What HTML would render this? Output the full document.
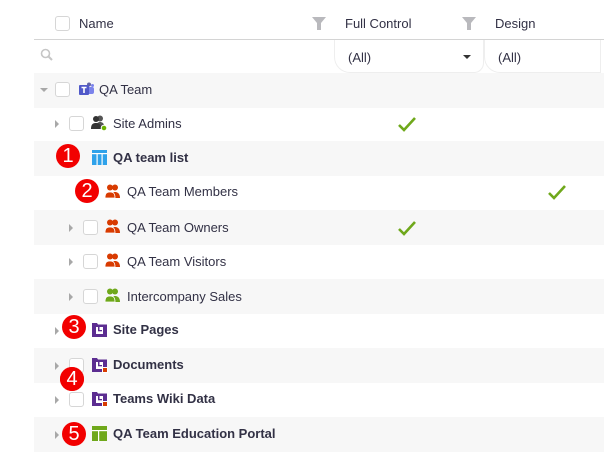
<!DOCTYPE html>
<html><head><meta charset="utf-8"><style>
*{margin:0;padding:0;box-sizing:border-box}
body{width:604px;height:455px;background:#fff;font-family:"Liberation Sans",sans-serif;font-size:13px;color:#323145;position:relative;overflow:hidden}
.a{position:absolute}
.row{position:absolute;left:34px;width:570px;height:35px}
.g{background:#f7f7f7}
.cb{position:absolute;width:15px;height:15px;border:1px solid #d6d6d6;border-radius:3px;background:#fff}
.car{position:absolute;width:0;height:0;border-top:4px solid transparent;border-bottom:4px solid transparent;border-left:4px solid #a8a8a8}
.t{position:absolute;line-height:16px;white-space:nowrap}
.b{position:absolute;width:24px;height:24px;border-radius:12px;background:#f20000;color:#fff;font-size:20px;line-height:24px;text-align:center}
.chk{position:absolute}
</style></head><body>
<!-- header -->
<div class="cb" style="left:55px;top:16px"></div>
<div class="t" style="left:79px;top:16px">Name</div>
<svg class="a" style="left:311px;top:16px" width="16" height="15"><path d="M1 1H15L10 7V14H6V7Z" fill="#b9b9bd"/></svg>
<div class="t" style="left:345px;top:16px">Full Control</div>
<svg class="a" style="left:461px;top:16px" width="16" height="15"><path d="M1 1H15L10 7V14H6V7Z" fill="#b9b9bd"/></svg>
<div class="t" style="left:495px;top:16px">Design</div>
<div class="a" style="left:34px;top:39px;width:570px;height:1px;background:#d4d4d4"></div>
<!-- filter row -->
<svg class="a" style="left:40px;top:48px" width="14" height="14"><circle cx="5.5" cy="5.5" r="4" fill="none" stroke="#c6c6c6" stroke-width="1.6"/><path d="M8.5 8.5L12 12" stroke="#c6c6c6" stroke-width="2"/></svg>
<div class="a" style="left:334px;top:40px;width:150px;height:33px;border:1px solid #eee;border-top:none;border-radius:0 0 10px 16px"></div>
<div class="t" style="left:348px;top:50px">(All)</div>
<div class="a" style="left:463px;top:55px;border-left:4px solid transparent;border-right:4px solid transparent;border-top:4px solid #333"></div>
<div class="a" style="left:484px;top:40px;width:117px;height:33px;border:1px solid #eee;border-top:none;border-radius:0 0 0 16px"></div>
<div class="t" style="left:498px;top:50px">(All)</div>
<!-- rows -->
<div class="row g" style="top:73px"></div>
<div class="row" style="top:107px"></div>
<div class="row g" style="top:141px"></div>
<div class="row" style="top:176px"></div>
<div class="row g" style="top:210px"></div>
<div class="row" style="top:245px"></div>
<div class="row g" style="top:279px"></div>
<div class="row" style="top:314px"></div>
<div class="row g" style="top:348px"></div>
<div class="row" style="top:383px"></div>
<div class="row g" style="top:417px"></div>

<!-- QA Team -->
<div class="a" style="left:40px;top:88px;border-left:4px solid transparent;border-right:4px solid transparent;border-top:4px solid #a8a8a8"></div>
<div class="cb" style="left:55px;top:82px"></div>
<svg class="a" style="left:78px;top:82px" width="16" height="14"><circle cx="11" cy="2.5" r="2" fill="#6264a7"/><circle cx="14.5" cy="3.5" r="1.5" fill="#7b83eb"/><rect x="9" y="5" width="7" height="7" rx="2" fill="#7b83eb"/><rect x="1" y="3" width="10" height="10" rx="1" fill="#5059c9"/><path d="M3.5 5.5H8.5M6 5.5V11" stroke="#fff" stroke-width="1.6"/></svg>
<div class="t" style="left:99px;top:82px">QA Team</div>

<!-- Site Admins -->
<div class="car" style="left:55px;top:120px"></div>
<div class="cb" style="left:69px;top:116px"></div>
<svg class="a" style="left:91px;top:115px" width="17" height="17"><circle cx="9" cy="3.5" r="3" fill="#555"/><path d="M5 13C5 8 7 7 9 7S13 8 13 11V13Z" fill="#555"/><circle cx="5" cy="4" r="3" fill="#333"/><path d="M0 14C0 9 2 8 5 8S10 9 10 14Z" fill="#333"/><circle cx="13" cy="13" r="2.8" fill="#6bb300" stroke="#fff" stroke-width="1"/></svg>
<div class="t" style="left:113px;top:116px">Site Admins</div>
<svg class="chk" style="left:398px;top:117px" width="18" height="15"><path d="M1 8L6 13L17 1" fill="none" stroke="#6fa81b" stroke-width="2.6"/></svg>

<!-- QA team list -->
<svg class="a" style="left:92px;top:150px" width="15" height="15"><rect x="0" y="0" width="15" height="15" fill="#2fa2ea"/><rect x="0" y="3" width="15" height="1.2" fill="#fff"/><rect x="4.5" y="4" width="1.2" height="11" fill="#fff"/><rect x="9.5" y="4" width="1.2" height="11" fill="#fff"/></svg>
<div class="t" style="left:113px;top:150px;font-weight:bold">QA team list</div>
<div class="b" style="left:56px;top:144px">1</div>

<!-- Members -->
<svg class="a" style="left:105px;top:184px" width="17" height="15"><circle cx="10" cy="3.5" r="3" fill="#d83b01"/><path d="M6 14C6 9 8 8 10 8S15 9 15 14Z" fill="#d83b01"/><circle cx="5" cy="3.5" r="3" fill="#d83b01"/><path d="M0 14C0 9 2 8 5 8S10 9 10 14Z" fill="#d83b01" stroke="#fff" stroke-width=".8"/></svg>
<div class="t" style="left:127px;top:184px">QA Team Members</div>
<div class="b" style="left:75px;top:179px">2</div>
<svg class="chk" style="left:548px;top:185px" width="18" height="15"><path d="M1 8L6 13L17 1" fill="none" stroke="#6fa81b" stroke-width="2.6"/></svg>

<!-- Owners -->
<div class="car" style="left:69px;top:224px"></div>
<div class="cb" style="left:83px;top:220px"></div>
<svg class="a" style="left:105px;top:219px" width="17" height="15"><circle cx="10" cy="3.5" r="3" fill="#d83b01"/><path d="M6 14C6 9 8 8 10 8S15 9 15 14Z" fill="#d83b01"/><circle cx="5" cy="3.5" r="3" fill="#d83b01"/><path d="M0 14C0 9 2 8 5 8S10 9 10 14Z" fill="#d83b01" stroke="#fff" stroke-width=".8"/></svg>
<div class="t" style="left:127px;top:220px">QA Team Owners</div>
<svg class="chk" style="left:398px;top:221px" width="18" height="15"><path d="M1 8L6 13L17 1" fill="none" stroke="#6fa81b" stroke-width="2.6"/></svg>

<!-- Visitors -->
<div class="car" style="left:69px;top:258px"></div>
<div class="cb" style="left:83px;top:254px"></div>
<svg class="a" style="left:105px;top:253px" width="17" height="15"><circle cx="10" cy="3.5" r="3" fill="#d83b01"/><path d="M6 14C6 9 8 8 10 8S15 9 15 14Z" fill="#d83b01"/><circle cx="5" cy="3.5" r="3" fill="#d83b01"/><path d="M0 14C0 9 2 8 5 8S10 9 10 14Z" fill="#d83b01" stroke="#fff" stroke-width=".8"/></svg>
<div class="t" style="left:127px;top:254px">QA Team Visitors</div>

<!-- Intercompany -->
<div class="car" style="left:69px;top:293px"></div>
<div class="cb" style="left:83px;top:289px"></div>
<svg class="a" style="left:105px;top:288px" width="17" height="15"><circle cx="10" cy="3.5" r="3" fill="#6fa81b"/><path d="M6 14C6 9 8 8 10 8S15 9 15 14Z" fill="#6fa81b"/><circle cx="5" cy="3.5" r="3" fill="#6fa81b"/><path d="M0 14C0 9 2 8 5 8S10 9 10 14Z" fill="#6fa81b" stroke="#fff" stroke-width=".8"/></svg>
<div class="t" style="left:127px;top:289px">Intercompany Sales</div>

<!-- Site Pages -->
<div class="car" style="left:55px;top:327px"></div>
<svg class="a" style="left:92px;top:322px" width="15" height="15"><path d="M0 1H5L6 2.5H15V15H0Z" fill="#5c2d91"/><rect x="4" y="5" width="7" height="7" fill="#fff"/><rect x="6" y="5" width="1.5" height="4" fill="#5c2d91"/><rect x="6" y="8" width="4" height="1.3" fill="#5c2d91"/></svg>
<div class="t" style="left:113px;top:322px;font-weight:bold">Site Pages</div>
<div class="b" style="left:62px;top:315px">3</div>

<!-- Documents -->
<div class="car" style="left:55px;top:362px"></div>
<div class="cb" style="left:69px;top:358px"></div>
<svg class="a" style="left:92px;top:357px" width="16" height="16"><path d="M0 1H5L6 2.5H15V15H0Z" fill="#5c2d91"/><rect x="4" y="5" width="7" height="7" fill="#fff"/><rect x="6" y="5" width="1.5" height="4" fill="#5c2d91"/><rect x="6" y="8" width="4" height="1.3" fill="#5c2d91"/><rect x="10" y="10" width="6" height="6" fill="#fff"/><rect x="11" y="11" width="4" height="4" fill="#d83b01"/></svg>
<div class="t" style="left:113px;top:357px;font-weight:bold">Documents</div>
<div class="b" style="left:60px;top:367px">4</div>

<!-- Teams Wiki Data -->
<div class="car" style="left:55px;top:396px"></div>
<div class="cb" style="left:69px;top:392px"></div>
<svg class="a" style="left:92px;top:391px" width="16" height="16"><path d="M0 1H5L6 2.5H15V15H0Z" fill="#5c2d91"/><rect x="4" y="5" width="7" height="7" fill="#fff"/><rect x="6" y="5" width="1.5" height="4" fill="#5c2d91"/><rect x="6" y="8" width="4" height="1.3" fill="#5c2d91"/><rect x="10" y="10" width="6" height="6" fill="#fff"/><rect x="11" y="11" width="4" height="4" fill="#d83b01"/></svg>
<div class="t" style="left:113px;top:391px;font-weight:bold">Teams Wiki Data</div>
<div class="b" style="left:60px;top:367px">4</div>

<!-- Portal -->
<div class="car" style="left:55px;top:431px"></div>
<svg class="a" style="left:92px;top:426px" width="15" height="15"><rect x="0" y="0" width="15" height="15" fill="#6fa81b"/><rect x="0" y="4" width="15" height="1.2" fill="#fff"/><rect x="6" y="5" width="1.2" height="10" fill="#fff"/></svg>
<div class="t" style="left:113px;top:426px;font-weight:bold">QA Team Education Portal</div>
<div class="b" style="left:62px;top:422px">5</div>
</body></html>
